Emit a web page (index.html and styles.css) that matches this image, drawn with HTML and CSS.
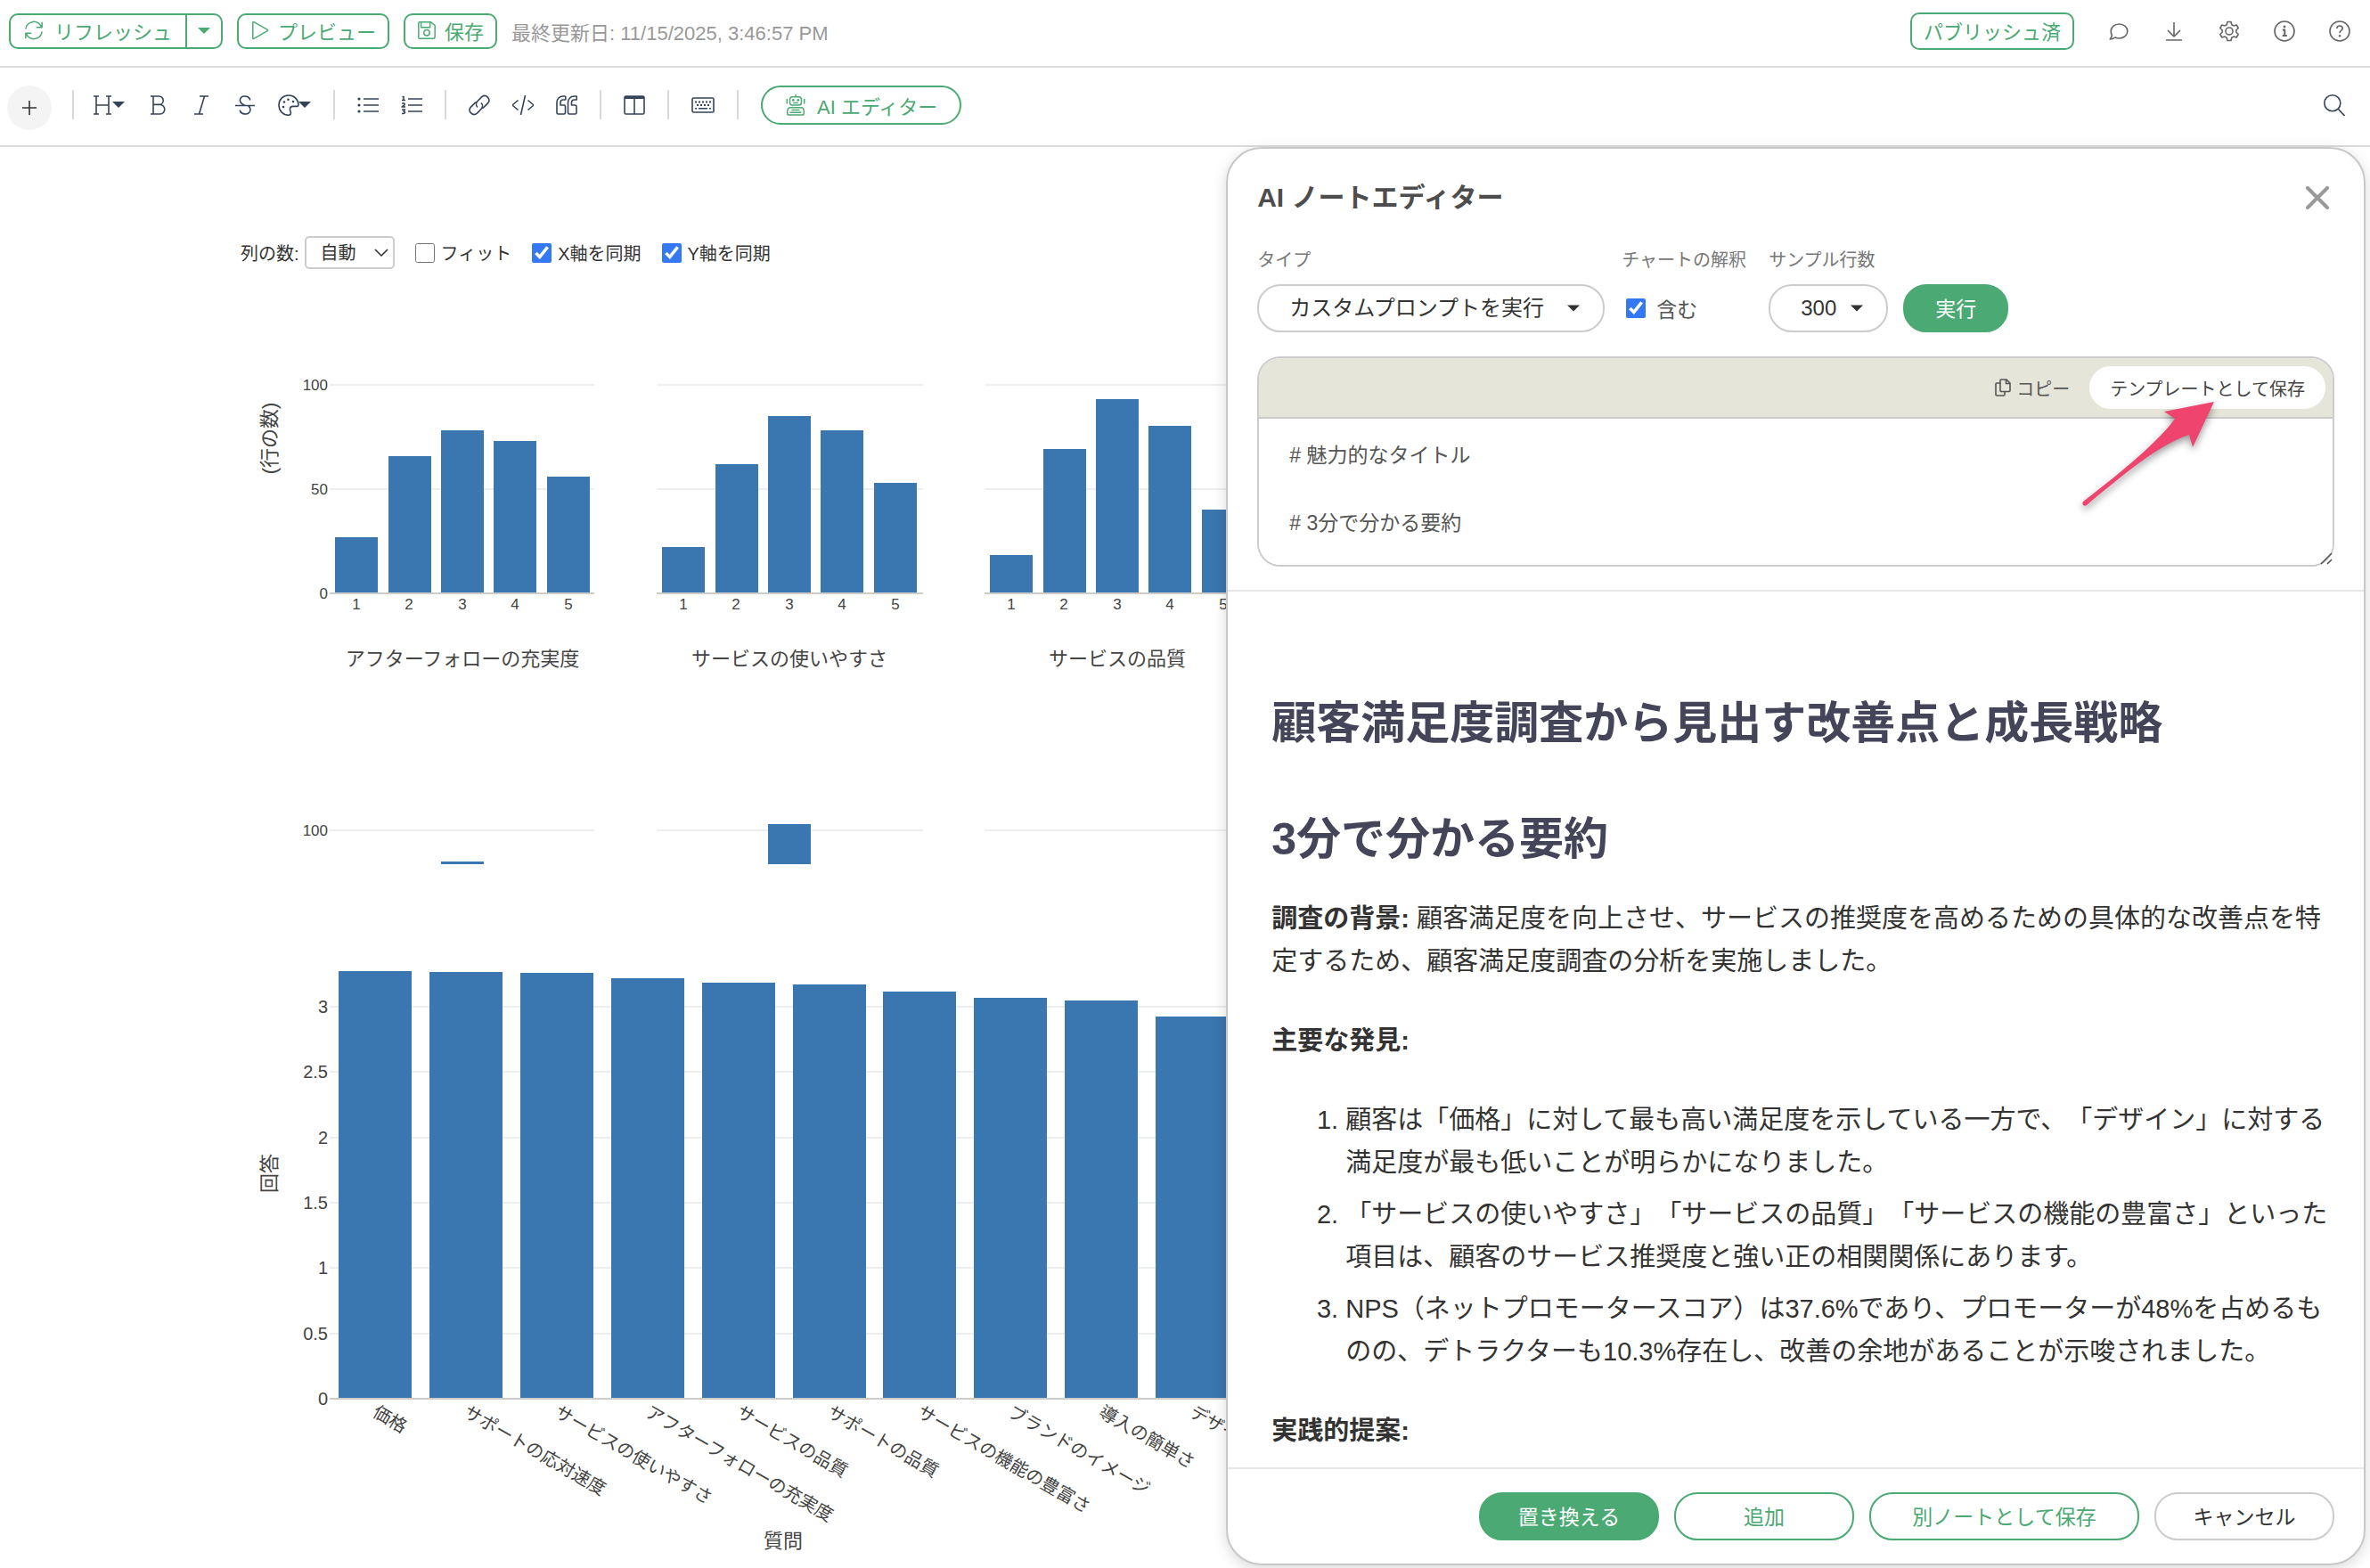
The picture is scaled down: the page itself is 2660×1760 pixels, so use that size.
FILE: index.html
```html
<!DOCTYPE html>
<html lang="ja">
<head>
  <meta charset="UTF-8" />
  <meta name="viewport" content="width=device-width, initial-scale=1.0"/>
  <title>AI ノートエディター</title>
  <link rel="stylesheet" href="styles.css">
</head>
<body>
  <header class="topbar">
    <div class="split-btn">
      <button class="btn btn-refresh">
        <svg class="icon" viewBox="0 0 24 24"><path d="M2 10.5a10 10 0 0 1 19.5-2M22 2v6.5h-7M22 13.500a10 10 0 0 1-19.500 2M2 22v-6.500h7"/></svg>
        リフレッシュ
      </button>
      <button class="btn btn-caret" aria-label="リフレッシュメニュー"><span class="caret"></span></button>
    </div>
    <button class="btn">
      <svg class="icon" viewBox="0 0 24 24"><path d="M3 2.500v19a.8.8 0 0 0 1.200.7L21 12.700a.8.8 0 0 0 0-1.400L4.200 1.800A.8.8 0 0 0 3 2.500z"/></svg>
      プレビュー
    </button>
    <button class="btn">
      <svg class="icon" viewBox="0 0 24 24"><path d="M3 2h14l5 4v14a2 2 0 0 1-2 2H3a1 1 0 0 1-1-1V3a1 1 0 0 1 1-1zM5 2v6.500h11V2"/><circle cx="12" cy="15" r="3.500"/></svg>
      保存
    </button>
    <span class="updated">最終更新日: 11/15/2025, 3:46:57 PM</span>

    <div class="topbar-right">
      <button class="btn btn-published">パブリッシュ済</button>
      <div class="icon-row">
        <button class="icon-btn" aria-label="コメント"><svg viewBox="0 0 24 24"><path d="M12.500 4c5.300 0 9.300 3.500 9.300 8s-4 8-9.300 8c-1.600 0-3.200-.3-4.600-1-1.600 1.300-3.500 2-5.700 2 1.200-1.300 2-2.800 2.200-4.300C3.500 15.300 3.200 13.700 3.200 12c0-4.500 4-8 9.300-8z"/></svg></button>
        <button class="icon-btn" aria-label="ダウンロード"><svg viewBox="0 0 24 24"><path d="M12 2v16M5 11l7 7 7-7M3 22h18"/></svg></button>
        <button class="icon-btn" aria-label="設定"><svg viewBox="0 0 24 24"><path d="M10 1.500h4l.8 3.200 2.200 1.200 3.200-.9 2 3.500-2.300 2.300v2.400l2.300 2.300-2 3.500-3.200-.9-2.200 1.200-.8 3.200h-4l-.8-3.200L7 18.100l-3.200.9-2-3.500 2.300-2.300v-2.400L1.800 8.500l2-3.500 3.200.9 2.200-1.200z"/><circle cx="12" cy="12" r="4"/></svg></button>
        <button class="icon-btn" aria-label="情報"><svg viewBox="0 0 24 24"><circle cx="12" cy="12" r="11"/><path class="bold" d="M10 10.500h2.300V17M9.800 17h5"/><circle class="fill" cx="12" cy="7" r="1.400"/></svg></button>
        <button class="icon-btn" aria-label="ヘルプ"><svg viewBox="0 0 24 24"><circle cx="12" cy="12" r="11"/><path d="M8.800 9c0-1.700 1.400-3 3.200-3s3.200 1.200 3.200 2.900c0 2.200-3.200 2.400-3.200 5"/><circle class="fill" cx="12" cy="17.300" r="1.200"/></svg></button>
      </div>
    </div>
  </header>

  <nav class="toolbar">
    <button class="add-btn" aria-label="追加メニュー"><svg viewBox="0 0 24 24"><path d="M12 4v16M4 12h16"/></svg></button>
    <span class="divider"></span>
    <div class="tools">
      <button class="tool" aria-label="見出し"><svg viewBox="0 0 24 24"><path d="M2 2h6M5 2v20M2 22h6M16 2h6M19 2v20M16 22h6M5 12h14"/></svg><span class="caret"></span></button>
      <button class="tool" aria-label="太字"><svg viewBox="0 0 24 24"><path d="M4 2h9.500a4.700 4.700 0 0 1 0 9.400H7M13.500 11.400h1a5.300 5.300 0 0 1 0 10.600H4M7 2v20"/></svg></button>
      <button class="tool" aria-label="斜体"><svg viewBox="0 0 24 24"><path d="M10 2h10M4 22h10M15.500 2l-6 20"/></svg></button>
      <button class="tool" aria-label="取り消し線"><svg viewBox="0 0 24 24"><path d="M1 12.500h22M17.500 6.500V5c-1.200-2-3.300-3-5.500-3-3.500 0-5.600 2-5.600 4.800 0 3 2.500 4.300 5.600 5.700M6.500 17.500V19c1.200 2 3.500 3 5.900 3 3.300 0 5.600-2 5.600-4.900 0-2-1-3.500-2.500-4.600"/></svg></button>
      <button class="tool" aria-label="文字色"><svg viewBox="0 0 24 24"><path d="M12 1C5.500 1 1 5.800 1 12c0 6.500 4.800 11.300 11 11.300 1.800 0 2.400-1 2.400-2.600 0-1.500-1-2.400-1-4 0-2.300 1.600-3.300 3.600-3.300h4.600c1 0 1.400-.5 1.400-1.600C22.800 5.600 18.200 1 12 1z"/><circle class="fill" cx="6" cy="14" r="1.300"/><circle class="fill" cx="7" cy="8.500" r="1.300"/><circle class="fill" cx="11.500" cy="5.700" r="1.300"/><circle class="fill" cx="17" cy="8" r="1.300"/></svg><span class="caret"></span></button>
      <span class="divider"></span>
      <button class="tool" aria-label="箇条書き"><svg viewBox="0 0 24 24"><path d="M7 5h17M7 12h17M7 19h17"/><circle class="fill" cx="2" cy="5" r="1.600"/><circle class="fill" cx="2" cy="12" r="1.600"/><circle class="fill" cx="2" cy="19" r="1.600"/></svg></button>
      <button class="tool" aria-label="番号付きリスト"><svg viewBox="0 0 24 24"><path d="M8 5h16M8 12h16M8 19h16"/><path d="M1.500 2.500H3v4M1 6.500h4M1 10h3v1.800L1.200 14H5M1 17h3.500L3 19c2.500 0 2 3-2 2.500"/></svg></button>
      <span class="divider"></span>
      <button class="tool" aria-label="リンク"><svg viewBox="0 0 24 24"><path d="M10 14.500a5 5 0 0 1 0-7L14.800 2.600a5 5 0 0 1 7 7L17 14.400c-.6.6-1.300 1-2 1.200"/><path d="M14 9.500a5 5 0 0 1 0 7l-4.800 4.900a5 5 0 0 1-7-7L7 9.600c.6-.6 1.300-1 2-1.200"/></svg></button>
      <button class="tool" aria-label="コード"><svg viewBox="0 0 24 24"><path d="M6.500 6.500L0 12l6.500 5.500M17.500 6.500L24 12l-6.500 5.500M14.500 1l-5 22"/></svg></button>
      <button class="tool" aria-label="引用"><svg viewBox="0 0 24 24"><path d="M10 2H8C4 2 1 5 1 9v11.500A1.500 1.500 0 0 0 2.500 22H9a1.500 1.500 0 0 0 1.500-1.500v-7A1.500 1.500 0 0 0 9 12H5V9c0-1.800 1.200-3 3-3h2c.5 0 .8-.3.8-.8V2.800c0-.5-.3-.8-.8-.8zM22.500 2h-2c-4 0-7 3-7 7v11.500A1.500 1.500 0 0 0 15 22h6.500a1.500 1.500 0 0 0 1.500-1.500v-7a1.500 1.500 0 0 0-1.500-1.500h-4V9c0-1.800 1.200-3 3-3h2c.5 0 .8-.3.8-.8V2.800c0-.5-.3-.8-.8-.8z"/></svg></button>
      <span class="divider"></span>
      <button class="tool" aria-label="カラム"><svg viewBox="0 0 24 24"><rect x="1" y="2" width="22" height="20" rx="1.500"/><path d="M12 3v19"/><path class="thick" d="M1 3.500h22"/></svg></button>
      <span class="divider"></span>
      <button class="tool" aria-label="キーボード"><svg class="wide" viewBox="0 0 26 24"><rect x="1" y="4" width="24" height="16" rx="1.500"/><path class="dots" d="M4 8.500h18"/><path class="dots" d="M6 12h15"/><path d="M4 15.800h2M8 15.800h10M20 15.800h2"/></svg></button>
      <span class="divider"></span>
      <button class="ai-btn">
        <svg viewBox="0 0 24 26"><path d="M12 0v3M8 3h8a3 3 0 0 1 3 3v4a3 3 0 0 1-3 3H8a3 3 0 0 1-3-3V6a3 3 0 0 1 3-3zM1.500 5.500v6M22.500 5.500v6M9 10.300h6M6 16h12c2.500 0 4 2 4 4.500V23a2 2 0 0 1-2 2H4a2 2 0 0 1-2-2v-2.500C2 18 3.500 16 6 16zM7 19h10M5 22h14"/><circle class="fill" cx="9" cy="7" r="1.500"/><circle class="fill" cx="15" cy="7" r="1.500"/></svg>
        AI エディター
      </button>
    </div>
    <button class="search-btn" aria-label="検索"><svg viewBox="0 0 24 24"><circle cx="9.800" cy="9.800" r="9"/><path d="M16.200 16.200L23.500 24"/></svg></button>
  </nav>

  <main class="workspace">
    <section class="note">
      <div class="chart-controls">
        <div class="field-inline">
          <label for="columns">列の数:</label>
          <span class="select-box select-small">
            <select id="columns"><option>自動</option></select>
            <svg class="chevron" viewBox="0 0 16 10"><path d="M1 1l7 7 7-7"/></svg>
          </span>
        </div>
        <label class="check"><input type="checkbox">フィット</label>
        <label class="check"><input type="checkbox" checked>X軸を同期</label>
        <label class="check"><input type="checkbox" checked>Y軸を同期</label>
      </div>

      <!-- histogram per question, split by score -->
      <svg class="chart chart-multi" width="1480" height="570">
        <text class="axis-title" transform="translate(40 92) rotate(-90)">(行の数)</text>
        <g class="ticks-small ticks-y">
          <text x="98" y="38">100</text>
          <text x="98" y="155">50</text>
          <text x="98" y="272">0</text>
          <text x="98" y="538">100</text>
        </g>
        <g>
          <path class="grid" d="M100 32h297M100 149h297M100 532h297"/>
          <g class="bar">
            <rect x="106" y="203" width="48" height="63"/>
            <rect x="166" y="112" width="48" height="154"/>
            <rect x="225" y="83" width="48" height="183"/>
            <rect x="284" y="95" width="48" height="171"/>
            <rect x="344" y="135" width="48" height="131"/>
            <rect x="225" y="567" width="48" height="3"/>
          </g>
          <path class="baseline" d="M100 266h297"/>
          <g class="ticks-small ticks-x">
            <text x="130" y="284">1</text><text x="189" y="284">2</text><text x="249" y="284">3</text><text x="308" y="284">4</text><text x="368" y="284">5</text>
          </g>
          <text class="axis-title" x="249" y="347">アフターフォローの充実度</text>
        </g>
        <g transform="translate(367 0)">
          <path class="grid" d="M100 32h299M100 149h299M100 532h299"/>
          <g class="bar">
            <rect x="106" y="214" width="48" height="52"/>
            <rect x="166" y="121" width="48" height="145"/>
            <rect x="225" y="67" width="48" height="199"/>
            <rect x="284" y="83" width="48" height="183"/>
            <rect x="344" y="142" width="48" height="124"/>
            <rect x="225" y="525" width="48" height="45"/>
          </g>
          <path class="baseline" d="M100 266h299"/>
          <g class="ticks-small ticks-x">
            <text x="130" y="284">1</text><text x="189" y="284">2</text><text x="249" y="284">3</text><text x="308" y="284">4</text><text x="368" y="284">5</text>
          </g>
          <text class="axis-title" x="249" y="347">サービスの使いやすさ</text>
        </g>
        <g transform="translate(735 0)">
          <path class="grid" d="M100 32h299M100 149h299M100 532h299"/>
          <g class="bar">
            <rect x="106" y="223" width="48" height="43"/>
            <rect x="166" y="104" width="48" height="162"/>
            <rect x="225" y="48" width="48" height="218"/>
            <rect x="284" y="78" width="48" height="188"/>
            <rect x="344" y="172" width="48" height="94"/>
          </g>
          <path class="baseline" d="M100 266h299"/>
          <g class="ticks-small ticks-x">
            <text x="130" y="284">1</text><text x="189" y="284">2</text><text x="249" y="284">3</text><text x="308" y="284">4</text><text x="368" y="284">5</text>
          </g>
          <text class="axis-title" x="249" y="347">サービスの品質</text>
        </g>
      </svg>

      <!-- average score by question -->
      <svg class="chart chart-average" width="1480" height="680">
        <text class="axis-title" transform="translate(40 237) rotate(-90)">回答</text>
        <path class="grid" d="M100 50h1120M100 123h1120M100 197h1120M100 270h1120M100 343h1120M100 417h1120"/>
        <g class="ticks ticks-y">
          <text x="98" y="57">3</text>
          <text x="98" y="130">2.5</text>
          <text x="98" y="204">2</text>
          <text x="98" y="277">1.5</text>
          <text x="98" y="350">1</text>
          <text x="98" y="424">0.5</text>
          <text x="98" y="497">0</text>
        </g>
        <g class="bar">
          <rect x="110" y="10" width="82" height="480"/>
          <rect x="212" y="11" width="82" height="479"/>
          <rect x="314" y="12" width="82" height="478"/>
          <rect x="416" y="18" width="82" height="472"/>
          <rect x="518" y="23" width="82" height="467"/>
          <rect x="620" y="25" width="82" height="465"/>
          <rect x="721" y="33" width="82" height="457"/>
          <rect x="823" y="40" width="82" height="450"/>
          <rect x="925" y="43" width="82" height="447"/>
          <rect x="1027" y="61" width="82" height="429"/>
        </g>
        <path class="baseline" d="M100 490h1120"/>
        <g class="ticks">
          <text transform="translate(147 509) rotate(30)">価格</text>
          <text transform="translate(249 509) rotate(30)">サポートの応対速度</text>
          <text transform="translate(351 509) rotate(30)">サービスの使いやすさ</text>
          <text transform="translate(453 509) rotate(30)">アフターフォローの充実度</text>
          <text transform="translate(555 509) rotate(30)">サービスの品質</text>
          <text transform="translate(657 509) rotate(30)">サポートの品質</text>
          <text transform="translate(758 509) rotate(30)">サービスの機能の豊富さ</text>
          <text transform="translate(860 509) rotate(30)">ブランドのイメージ</text>
          <text transform="translate(962 509) rotate(30)">導入の簡単さ</text>
          <text transform="translate(1064 509) rotate(30)">デザイン</text>
        </g>
        <text class="axis-title" x="609" y="657">質問</text>
      </svg>
    </section>

    <aside class="panel">
      <div class="panel-head">
        <div class="panel-title">
          <h2>AI ノートエディター</h2>
          <button class="close-btn" aria-label="閉じる"><svg viewBox="0 0 26 26"><path d="M2 2l22 22M24 2L2 24"/></svg></button>
        </div>
        <form class="options">
          <div class="field field-type">
            <label for="type">タイプ</label>
            <span class="select-box select-pill">
              <select id="type"><option>カスタムプロンプトを実行</option></select>
              <span class="caret"></span>
            </span>
          </div>
          <div class="field field-chart">
            <span class="field-label">チャートの解釈</span>
            <label class="check"><input type="checkbox" checked>含む</label>
          </div>
          <div class="field field-rows">
            <label for="rows">サンプル行数</label>
            <span class="select-box select-pill">
              <select id="rows"><option>300</option></select>
              <span class="caret"></span>
            </span>
          </div>
          <button type="button" class="pill pill-fill run-btn">実行</button>
        </form>
        <div class="prompt-box">
          <div class="prompt-bar">
            <button class="copy-btn"><svg viewBox="0 0 18 20"><path d="M7 1h6l4 4v8.500a1 1 0 0 1-1 1H7a1 1 0 0 1-1-1V2a1 1 0 0 1 1-1zM12.500 1v4.500H17M6 5H2a1 1 0 0 0-1 1v12a1 1 0 0 0 1 1h8a1 1 0 0 0 1-1v-3.500"/></svg>コピー</button>
            <button class="template-btn">テンプレートとして保存</button>
          </div>
          <textarea class="prompt-text" aria-label="プロンプト">
# 魅力的なタイトル

# 3分で分かる要約</textarea>
          <svg class="grip" viewBox="0 0 14 14"><path d="M1 13L13 1M8 13l5-5"/></svg>
          <svg class="arrow" viewBox="0 0 160 130"><path d="M151 3L95 14l12 8C85 52 40 87 4 115c-2 3 1 6 4 4C45 88 90 50 123 40l4 14z"/></svg>
        </div>
      </div>

      <article class="result">
        <h1>顧客満足度調査から見出す改善点と成長戦略</h1>
        <h1>3分で分かる要約</h1>
        <p><strong>調査の背景:</strong> 顧客満足度を向上させ、サービスの推奨度を高めるための具体的な改善点を特定するため、顧客満足度調査の分析を実施しました。</p>
        <p><strong>主要な発見:</strong></p>
        <ol>
          <li>顧客は「価格」に対して最も高い満足度を示している一方で、「デザイン」に対する満足度が最も低いことが明らかになりました。</li>
          <li>「サービスの使いやすさ」「サービスの品質」「サービスの機能の豊富さ」といった項目は、顧客のサービス推奨度と強い正の相関関係にあります。</li>
          <li>NPS（ネットプロモータースコア）は37.6%であり、プロモーターが48%を占めるものの、デトラクターも10.3%存在し、改善の余地があることが示唆されました。</li>
        </ol>
        <p><strong>実践的提案:</strong></p>
      </article>

      <footer class="panel-foot">
        <button class="pill pill-fill">置き換える</button>
        <button class="pill pill-green">追加</button>
        <button class="pill pill-green pill-wide">別ノートとして保存</button>
        <button class="pill">キャンセル</button>
      </footer>
    </aside>
  </main>
</body>
</html>
```

FILE: styles.css
```css
* {
  box-sizing: border-box;
}

body {
  margin: 0;
  height: 100vh;
  display: flex;
  flex-direction: column;
  overflow: hidden;
  font-family: "Liberation Sans", "Noto Sans CJK JP", sans-serif;
  font-size: 20px;
  color: #333;
  background: #fff;
}

button, select, textarea, input {
  font: inherit;
  color: inherit;
  margin: 0;
}

button {
  display: flex;
  align-items: center;
  justify-content: center;
  padding: 0;
  border: none;
  background: none;
  white-space: nowrap;
  cursor: pointer;
}

svg {
  flex: none;
  fill: none;
  stroke: currentColor;
  stroke-width: 1.6;
  stroke-linejoin: round;
}

svg .fill {
  fill: currentColor;
  stroke: none;
}

svg .bold {
  stroke-width: 2;
}

svg .thick {
  stroke-width: 3;
}

svg .dots {
  stroke-width: 2;
  stroke-dasharray: 2 2;
}

.caret {
  flex: none;
  width: 0;
  height: 0;
  border: 7px solid transparent;
  border-top-color: currentColor;
  border-bottom: none;
}

/* top bar */
.topbar {
  display: flex;
  align-items: center;
  gap: 16px;
  padding: 14px 22px 18px 10px;
  border-bottom: 2px solid #ddd;
}

.btn {
  height: 40px;
  padding: 0 13px 2px;
  gap: 9px;
  border: 2px solid #4ba973;
  border-radius: 10px;
  font-size: 22px;
  color: #4ba973;
}

.btn .icon {
  width: 22px;
  height: 22px;
}

.split-btn {
  display: flex;
}

.btn-refresh {
  padding: 0 15px 2px;
  gap: 12px;
  border-radius: 10px 0 0 10px;
}

.btn-caret {
  width: 42px;
  margin-left: -2px;
  border-radius: 0 10px 10px 0;
}

.updated {
  font-size: 22px;
  color: #999;
}

.topbar-right {
  display: flex;
  align-items: center;
  gap: 38px;
  margin-left: auto;
}

.btn-published {
  height: 42px;
}

.icon-row {
  display: flex;
  gap: 38px;
}

.icon-btn svg {
  width: 24px;
  height: 24px;
  color: #666;
}

/* toolbar */
.toolbar {
  display: flex;
  align-items: center;
  gap: 20px;
  height: 89px;
  padding: 0 28px 4px 8px;
  border-bottom: 2px solid #ddd;
  color: #34435a;
}

.add-btn {
  width: 50px;
  height: 50px;
  margin: 6px 3px 0 0;
  border-radius: 50%;
  background: #f4f4f4;
  color: #333;
}

.tools {
  display: flex;
  align-items: center;
  gap: 25px;
}

.divider {
  width: 2px;
  height: 33px;
  background: #d9d9d9;
}

.toolbar svg {
  width: 24px;
  height: 24px;
}

.toolbar .wide {
  width: 26px;
}

.tool .caret {
  margin-left: -1px;
}

.ai-btn {
  height: 44px;
  padding: 0 25px;
  gap: 12px;
  border: 2px solid #4ba973;
  border-radius: 22px;
  font-size: 22px;
  color: #4ba973;
}

.search-btn {
  margin-left: auto;
}

/* workspace */
.workspace {
  flex: 1;
  min-height: 0;
  display: grid;
  grid-template-columns: minmax(0, 1fr) calc(48% + 7px);
}

.note {
  padding: 100px 0 0 270px;
  overflow: hidden;
}

.chart-controls {
  display: flex;
  align-items: center;
  gap: 23px;
}

.field-inline {
  display: flex;
  align-items: center;
  gap: 6px;
}

.check {
  display: flex;
  align-items: center;
  gap: 7px;
}

.check input {
  width: 22px;
  height: 22px;
  accent-color: #3478f6;
}

.select-box {
  position: relative;
  display: block;
}

.select-box select {
  width: 100%;
  appearance: none;
  border: 2px solid #ccc;
  background: #fff;
}

.select-box .caret,
.select-box .chevron {
  position: absolute;
  top: 50%;
  transform: translateY(-50%);
  pointer-events: none;
}

.select-small {
  width: 101px;
}

.select-small select {
  height: 37px;
  padding: 0 16px;
  border-radius: 5px;
}

.chevron {
  right: 7px;
  width: 16px;
  height: 10px;
}

.chart {
  display: block;
  stroke: none;
}

.chart-multi {
  margin-top: 98px;
}

.chart-average {
  margin-top: 110px;
}

.chart text {
  fill: #444;
}

.axis-title {
  font-size: 22px;
  text-anchor: middle;
}

.ticks {
  font-size: 20px;
}

.ticks-small {
  font-size: 17px;
}

.ticks-y {
  text-anchor: end;
}

.ticks-x {
  text-anchor: middle;
}

.bar {
  fill: #3a76af;
}

.grid {
  stroke: #eee;
  stroke-width: 2;
}

.baseline {
  stroke: #ccc;
  stroke-width: 2;
}

/* AI panel */
.panel {
  position: relative;
  display: flex;
  flex-direction: column;
  min-height: 0;
  margin: 0 5px 3px 0;
  border: 2px solid #c8c8c8;
  border-radius: 40px;
  background: #fff;
  box-shadow: 0 4px 16px rgba(0, 0, 0, 0.15);
  overflow: hidden;
}

.panel-head {
  padding: 35px 33px 26px;
  border-bottom: 2px solid #e6e6e6;
}

.panel-title {
  display: flex;
  align-items: center;
  justify-content: space-between;
  padding-right: 6px;
}

.panel-title h2 {
  margin: 0;
  font-size: 30px;
  line-height: 40px;
  color: #4d4d4d;
}

.close-btn svg {
  width: 26px;
  height: 26px;
  stroke-width: 4;
  stroke-linecap: round;
  color: #999;
}

.options {
  display: flex;
  align-items: flex-end;
  gap: 17px;
  margin-top: 35px;
}

.field > label:first-child,
.field-label {
  display: block;
  margin-bottom: 12px;
  line-height: 30px;
  color: #777;
}

.field .check {
  height: 54px;
  padding-left: 7px;
  gap: 12px;
  font-size: 23px;
  color: #555;
}

.field-type {
  width: 390px;
}

.field-chart {
  width: 150px;
  white-space: nowrap;
}

.field-chart .field-label {
  margin-left: 2px;
}

.field-rows {
  width: 134px;
}

.select-pill select {
  height: 54px;
  padding: 0 34px 2px;
  border-radius: 26px;
  font-size: 24px;
}

.select-pill .caret {
  right: 28px;
}

.pill {
  min-width: 202px;
  height: 54px;
  padding: 0 32px 3px;
  border: 2px solid #ccc;
  border-radius: 26px;
  font-size: 23px;
}

.pill-wide {
  min-width: 303px;
}

.pill-green {
  border-color: #4ba973;
  color: #4ba973;
}

.pill-fill {
  border-color: #4ba973;
  background: #4ba973;
  color: #fff;
}

.run-btn {
  min-width: 118px;
}

.prompt-box {
  position: relative;
  margin-top: 27px;
  border: 2px solid #ccc;
  border-radius: 26px;
}

.prompt-bar {
  display: flex;
  align-items: center;
  justify-content: flex-end;
  gap: 22px;
  height: 68px;
  padding: 0 8px;
  border-bottom: 2px solid #ccc;
  border-radius: 24px 24px 0 0;
  background: #e6e5d9;
}

.copy-btn {
  gap: 6px;
  color: #555;
}

.copy-btn svg {
  width: 18px;
  height: 20px;
}

.template-btn {
  height: 48px;
  padding: 0 23px;
  border-radius: 24px;
  background: #fff;
  color: #444;
}

.prompt-text {
  display: block;
  width: 100%;
  height: 164px;
  padding: 22px 34px;
  border: none;
  border-radius: 0 0 24px 24px;
  outline: none;
  resize: vertical;
  overflow: hidden;
  font-size: 23px;
  line-height: 38px;
  color: #555;
}

.prompt-text::-webkit-resizer {
  display: none;
}

.grip {
  position: absolute;
  right: 0;
  bottom: 0;
  width: 14px;
  height: 14px;
  color: #555;
  pointer-events: none;
}

.arrow {
  position: absolute;
  top: 46px;
  right: 124px;
  width: 160px;
  height: 130px;
  fill: #ee446d;
  stroke: none;
  filter: drop-shadow(0 4px 4px rgba(0, 0, 0, 0.4));
  pointer-events: none;
}

/* generated note */
.result {
  flex: 1;
  min-height: 0;
  padding: 118px 40px 0 49px;
  overflow: hidden;
  font-size: 29px;
  line-height: 48px;
  text-spacing-trim: space-all;
}

.result h1 {
  margin: 0 0 70px;
  font-size: 50px;
  line-height: 60px;
  color: #454559;
}

.result h1 + p {
  margin-top: -35px;
}

.result p {
  margin: 0 0 41px;
}

.result ol {
  margin: 0 -22px 41px 0;
  padding-left: 83px;
}

.result li + li {
  margin-top: 10px;
}

.panel-foot {
  display: flex;
  justify-content: flex-end;
  gap: 17px;
  padding: 26px 33px;
  border-top: 2px solid #e6e6e6;
}
```
